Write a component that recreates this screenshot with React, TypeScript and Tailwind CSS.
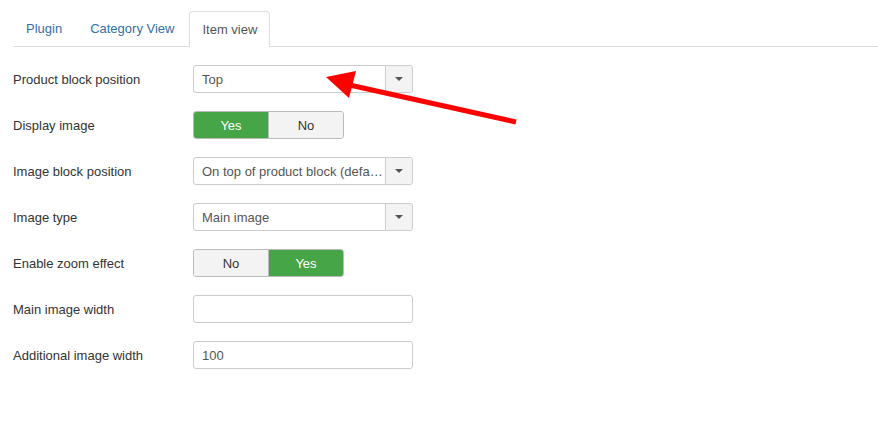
import React from "react";

const font = { fontFamily: '"Liberation Sans", Arial, sans-serif' };

function Caret() {
  return (
    <div className="flex w-[27px] items-center justify-center self-stretch border-l border-[#ccc] bg-[#f3f3f3] rounded-r-[3px]">
      <span className="block h-0 w-0 border-x-[4px] border-t-[4px] border-x-transparent border-t-[#555]" />
    </div>
  );
}

function Select({ value }: { value: string }) {
  return (
    <div className="flex h-[28px] w-[220px] items-center rounded-[3px] border border-[#ccc] bg-white">
      <span className="flex-1 truncate pl-[8px] pt-px text-[13px] text-[#555]">{value}</span>
      <Caret />
    </div>
  );
}

function Toggle({ yesFirst, on }: { yesFirst: boolean; on: "Yes" | "No" }) {
  const opts = yesFirst ? ["Yes", "No"] : ["No", "Yes"];
  return (
    <div className="flex h-[28px] w-[151px] overflow-hidden rounded-[3px] border border-[#bbb]">
      {opts.map((o, i) => (
        <div
          key={o}
          className={
            "flex flex-1 items-center justify-center pt-px text-[13px] " +
            (o === on ? "bg-[#46a546] text-white" : "bg-[#f3f3f3] text-[#333]") +
            (i === 0 ? " border-r border-[#bbb]" : "")
          }
        >
          {o}
        </div>
      ))}
    </div>
  );
}

function Input({ value = "" }: { value?: string }) {
  return (
    <div className="flex h-[28px] w-[220px] items-center rounded-[3px] border border-[#ccc] bg-white pl-[8px] pt-px text-[13px] text-[#555]">
      {value}
    </div>
  );
}

function Row({ label, children }: { label: string; children: React.ReactNode }) {
  return (
    <div className="flex h-[28px] items-center">
      <div className="w-[180px] pt-px text-[13px] text-[#333]">{label}</div>
      {children}
    </div>
  );
}

export default function App() {
  return (
    <div className="relative h-[434px] w-[878px] bg-white pl-[13px] pt-[11px]" style={font}>
      <div className="flex h-[36px] items-end border-b border-[#ddd] text-[13px]">
        <div className="flex h-[35px] items-center px-[13px] pt-px text-[#3071a9]">Plugin</div>
        <div className="ml-[1px] flex h-[35px] items-center px-[14px] pt-px text-[#3071a9]">Category View</div>
        <div className="-mb-px ml-px flex h-[36px] items-center rounded-t-[4px] border border-b-0 border-[#ddd] bg-white px-[12px] pt-px text-[#555]">
          Item view
        </div>
      </div>

      <div className="flex flex-col gap-[18px] pt-[18px]">
        <Row label="Product block position">
          <Select value="Top" />
        </Row>
        <Row label="Display image">
          <Toggle yesFirst on="Yes" />
        </Row>
        <Row label="Image block position">
          <Select value="On top of product block (default)" />
        </Row>
        <Row label="Image type">
          <Select value="Main image" />
        </Row>
        <Row label="Enable zoom effect">
          <Toggle yesFirst={false} on="Yes" />
        </Row>
        <Row label="Main image width">
          <Input />
        </Row>
        <Row label="Additional image width">
          <Input value="100" />
        </Row>
      </div>

      <svg className="pointer-events-none absolute left-0 top-0" width="878" height="434">
        <line x1="516" y1="122" x2="345" y2="84" stroke="#f00" strokeWidth="5" />
        <polygon points="326,77 356,71 349,98" fill="#f00" />
      </svg>
    </div>
  );
}
